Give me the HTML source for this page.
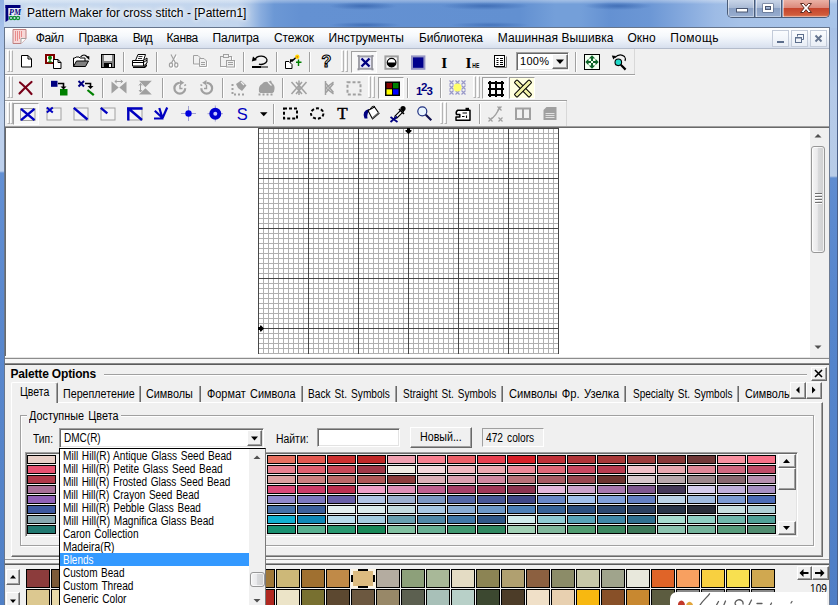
<!DOCTYPE html><html><head><meta charset="utf-8"><title>Pattern Maker for cross stitch</title><style>
html,body{margin:0;padding:0}
body{width:838px;height:605px;overflow:hidden;position:relative;background:#f0f0f0;font-family:"Liberation Sans",sans-serif;font-size:12px;color:#000}
.a{position:absolute;box-sizing:border-box}
.t{position:absolute;white-space:nowrap;line-height:1}
svg{position:absolute;overflow:visible}
.vsep{position:absolute;width:1px;background:#a0a0a0;box-shadow:1px 0 0 #fff}
.hsep{position:absolute;height:1px;background:#a0a0a0;box-shadow:0 1px 0 #fff}
.grip{position:absolute;width:1px;background:#fff;box-shadow:1px 0 0 #a0a0a0,3px 0 0 #fff,4px 0 0 #a0a0a0}
.btn{position:absolute;box-sizing:border-box;background:#f0f0f0;border:1px solid;border-color:#fff #696969 #696969 #fff;box-shadow:inset -1px -1px 0 #a0a0a0}
.sunk{position:absolute;box-sizing:border-box;border:1px solid;border-color:#a0a0a0 #fff #fff #a0a0a0;box-shadow:inset 1px 1px 0 #696969,inset -1px -1px 0 #e3e3e3}
</style></head><body>
<div class="a" style="left:0;top:0;width:838px;height:28px;background:radial-gradient(ellipse 34px 4px at 363px 6px,rgba(52,98,172,.75),rgba(52,98,172,0)),radial-gradient(ellipse 36px 3px at 365px 25px,rgba(52,98,172,.7),rgba(52,98,172,0)),radial-gradient(ellipse 44px 4px at 485px 6px,rgba(52,98,172,.7),rgba(52,98,172,0)),radial-gradient(ellipse 40px 3px at 490px 25px,rgba(52,98,172,.6),rgba(52,98,172,0)),radial-gradient(ellipse 34px 4px at 618px 6px,rgba(52,98,172,.7),rgba(52,98,172,0)),linear-gradient(180deg,rgba(255,255,255,.35) 0,rgba(255,255,255,.12) 3px,rgba(255,255,255,0) 4px),linear-gradient(90deg,#c8daef 0,#c2d5ed 238px,#adc6e7 250px,#88acde 261px,#6c98d5 274px,#6491d2 300px,#6290d1 520px,#749fd9 555px,#749fd9 580px,#6491d2 610px,#6c97d5 650px,#86aade 685px,#9dbbe5 715px,#a6c2e8 740px,#a8c4e9 838px)"></div>
<div class="a" style="left:0;top:0;width:4px;height:605px;background:linear-gradient(180deg,#8fb0e2 0,#a9c3ea 30px,#bdd0ec 120px,#bdd0ec 171px,#6390d4 173px,#5a88ce 300px,#5080c6 605px)"></div>
<div class="a" style="left:4px;top:27px;width:1px;height:578px;background:#66758c;"></div>
<div class="a" style="left:830px;top:28px;width:7px;height:577px;background:linear-gradient(180deg,#a6c0e6 0,#b4cae9 60px,#b8cce8 148px,#5f8cd0 150px,#5585cc 300px,#4f7ec6 577px)"></div>
<div class="a" style="left:829px;top:27px;width:1px;height:578px;background:#6c7b93;"></div>
<div class="a" style="left:837px;top:0px;width:1px;height:605px;background:#4a5f86;"></div>
<div class="a" style="left:5px;top:27px;width:824px;height:1px;background:#66758c;"></div>
<svg style="left:5px;top:5px" width="16" height="17" viewBox="0 0 15 17"><rect x="0" y="0" width="15" height="3" fill="#00007b"/><path d="M0 0h3v15l-3 2z" fill="#00007b"/><rect x="3" y="3" width="12" height="8" fill="#e8eef8"/><circle cx="5.5" cy="13" r="1.6" fill="none" stroke="#109030" stroke-width="1.2"/><circle cx="9" cy="13" r="1.6" fill="none" stroke="#109030" stroke-width="1.2"/><circle cx="12.5" cy="13" r="1.6" fill="none" stroke="#109030" stroke-width="1.2"/><text x="3.5" y="10" font-family="Liberation Serif,serif" font-style="italic" font-weight="bold" font-size="8" fill="#00007b">PM</text></svg>
<div class="t" style="left:27px;top:7px;font-size:12px;letter-spacing:0.017px;text-shadow:0 0 5px #fff,0 0 5px #fff,0 0 9px #fff;">Pattern Maker for cross stitch - [Pattern1]</div>
<div class="a" style="left:727px;top:0;width:103px;height:18px;border:1px solid #4a5c78;border-top:0;border-radius:0 0 5px 5px;background:#8ea4c6;overflow:hidden"><div class="a" style="left:0;top:0;width:27px;height:17px;background:linear-gradient(180deg,#c9d5e8 0,#aabbd6 45%,#8aa0c4 50%,#98aed0 100%);border-right:1px solid #4a5c78;box-shadow:inset 1px 0 0 rgba(255,255,255,.5),inset -1px -1px 0 rgba(255,255,255,.4)"></div><div class="a" style="left:28px;top:0;width:26px;height:17px;background:linear-gradient(180deg,#c9d5e8 0,#aabbd6 45%,#8aa0c4 50%,#98aed0 100%);border-right:1px solid #4a5c78;box-shadow:inset 1px 0 0 rgba(255,255,255,.5),inset -1px -1px 0 rgba(255,255,255,.4)"></div><div class="a" style="left:55px;top:0;width:47px;height:17px;background:linear-gradient(180deg,#eab1a5 0,#dc8a7c 45%,#c6452d 50%,#cf5a3a 85%,#dd8060 100%);box-shadow:inset 1px 0 0 rgba(255,255,255,.5),inset -1px -1px 0 rgba(255,255,255,.4)"></div></div>
<svg style="left:736px;top:8px" width="12" height="5"><rect x="0.5" y="0.5" width="11" height="3.5" fill="#fff" stroke="#4a5670" stroke-width="1"/></svg>
<svg style="left:762px;top:3px" width="12" height="10"><rect x="1" y="1" width="10" height="8" fill="none" stroke="#4a5670" stroke-width="1" /><rect x="2" y="2" width="8" height="6" fill="none" stroke="#fff" stroke-width="2"/><rect x="3.5" y="3.5" width="5" height="3" fill="none" stroke="#4a5670" stroke-width="1"/></svg>
<svg style="left:799px;top:2px" width="14" height="12" viewBox="0 0 14 12"><path d="M1.5 1.5h3.2L7 4.3 9.3 1.5h3.2L8.8 6l3.7 4.5H9.3L7 7.7 4.7 10.5H1.5L5.2 6z" fill="#fff" stroke="#5a2a20" stroke-width="1" stroke-linejoin="round"/></svg>
<div class="a" style="left:5px;top:28px;width:824px;height:20px;background:linear-gradient(180deg,#ffffff 0,#f5f8fc 40%,#e7edf6 70%,#d7dfed 100%)"></div>
<div class="a" style="left:5px;top:48px;width:824px;height:1px;background:#b4bccb;"></div>
<div class="t" style="left:35.7px;top:32px;font-size:12px;letter-spacing:-0.404px;">Файл</div>
<div class="t" style="left:78.5px;top:32px;font-size:12px;letter-spacing:-0.258px;">Правка</div>
<div class="t" style="left:132.8px;top:32px;font-size:12px;letter-spacing:-0.840px;">Вид</div>
<div class="t" style="left:166.5px;top:32px;font-size:12px;letter-spacing:-0.384px;">Канва</div>
<div class="t" style="left:212.5px;top:32px;font-size:12px;letter-spacing:-0.194px;">Палитра</div>
<div class="t" style="left:274px;top:32px;font-size:12px;letter-spacing:-0.089px;">Стежок</div>
<div class="t" style="left:328.5px;top:32px;font-size:12px;letter-spacing:0.061px;">Инструменты</div>
<div class="t" style="left:419px;top:32px;font-size:12px;letter-spacing:-0.145px;">Библиотека</div>
<div class="t" style="left:497.8px;top:32px;font-size:12px;letter-spacing:0.080px;">Машинная Вышивка</div>
<div class="t" style="left:627.4px;top:32px;font-size:12px;letter-spacing:0.102px;">Окно</div>
<div class="t" style="left:670.2px;top:32px;font-size:12px;letter-spacing:0.373px;">Помощь</div>
<svg style="left:12px;top:29px" width="15" height="15" viewBox="0 0 15 15"><path d="M1 0.5h13v9l-5 5H1z" fill="#f8d8d8" stroke="#c08080" stroke-width="1"/><path d="M9 14.5v-5h5" fill="#fff" stroke="#a0a0a0" stroke-width="1"/><path d="M3 3h8M3 5h8M3 7h8M3 9h5M3 11h4" stroke="#d84040" stroke-width="1" stroke-dasharray="1 1"/></svg>
<div class="a" style="left:772px;top:30px;width:17px;height:17px;border:1px solid #c3cbd9;background:linear-gradient(180deg,#fafcfe,#e9eef6)"></div>
<div class="a" style="left:791px;top:30px;width:17px;height:17px;border:1px solid #c3cbd9;background:linear-gradient(180deg,#fafcfe,#e9eef6)"></div>
<div class="a" style="left:810px;top:30px;width:17px;height:17px;border:1px solid #c3cbd9;background:linear-gradient(180deg,#fafcfe,#e9eef6)"></div>
<svg style="left:772px;top:30px" width="17" height="17"><rect x="5" y="11" width="7" height="2" fill="#5c6e8c"/></svg>
<svg style="left:791px;top:30px" width="17" height="17"><path d="M6.5 6.5v-2h6v5h-2" fill="none" stroke="#5c6e8c" stroke-width="1"/><rect x="6" y="4" width="7" height="1" fill="#5c6e8c"/><rect x="4.5" y="7.5" width="6" height="5" fill="none" stroke="#5c6e8c" stroke-width="1"/><rect x="4" y="7" width="7" height="1.5" fill="#5c6e8c"/></svg>
<svg style="left:810px;top:30px" width="17" height="17"><path d="M5.500 5.500l6 6M11.500 5.500l-6 6" stroke="#64748f" stroke-width="1.900"/></svg>
<div class="a" style="left:5px;top:49px;width:824px;height:78px;background:#f0f0f0;"></div>
<div class="hsep" style="left:5px;top:74px;width:630px"></div>
<div class="hsep" style="left:5px;top:100px;width:562px"></div>
<div class="a" style="left:5px;top:126px;width:824px;height:1px;background:#a0a0a0;"></div>
<div class="a" style="left:5px;top:127px;width:824px;height:1px;background:#696969;"></div>
<div class="a" style="left:7px;top:50px;width:3px;height:22px;border:1px solid;border-color:#fff #b4b4b4 #b4b4b4 #fff"></div>
<div class="a" style="left:10px;top:50px;width:3px;height:22px;border:1px solid;border-color:#fff #b4b4b4 #b4b4b4 #fff"></div>
<div class="a" style="left:7px;top:76px;width:3px;height:22px;border:1px solid;border-color:#fff #b4b4b4 #b4b4b4 #fff"></div>
<div class="a" style="left:10px;top:76px;width:3px;height:22px;border:1px solid;border-color:#fff #b4b4b4 #b4b4b4 #fff"></div>
<div class="a" style="left:7px;top:102px;width:3px;height:22px;border:1px solid;border-color:#fff #b4b4b4 #b4b4b4 #fff"></div>
<div class="a" style="left:10px;top:102px;width:3px;height:22px;border:1px solid;border-color:#fff #b4b4b4 #b4b4b4 #fff"></div>
<div class="vsep" style="left:123px;top:52px;height:20px"></div>
<div class="vsep" style="left:156px;top:52px;height:20px"></div>
<div class="vsep" style="left:243px;top:52px;height:20px"></div>
<div class="vsep" style="left:276px;top:52px;height:20px"></div>
<div class="vsep" style="left:309px;top:52px;height:20px"></div>
<div class="vsep" style="left:575px;top:52px;height:20px"></div>
<div class="a" style="left:341px;top:50px;width:3px;height:22px;border:1px solid;border-color:#fff #b4b4b4 #b4b4b4 #fff"></div>
<div class="a" style="left:345px;top:50px;width:3px;height:22px;border:1px solid;border-color:#fff #b4b4b4 #b4b4b4 #fff"></div>
<div class="vsep" style="left:42px;top:78px;height:20px"></div>
<div class="vsep" style="left:102px;top:78px;height:20px"></div>
<div class="vsep" style="left:162px;top:78px;height:20px"></div>
<div class="vsep" style="left:222px;top:78px;height:20px"></div>
<div class="vsep" style="left:282px;top:78px;height:20px"></div>
<div class="vsep" style="left:407px;top:78px;height:20px"></div>
<div class="vsep" style="left:440px;top:78px;height:20px"></div>
<div class="a" style="left:368px;top:76px;width:3px;height:22px;border:1px solid;border-color:#fff #b4b4b4 #b4b4b4 #fff"></div>
<div class="a" style="left:372px;top:76px;width:3px;height:22px;border:1px solid;border-color:#fff #b4b4b4 #b4b4b4 #fff"></div>
<div class="a" style="left:473px;top:76px;width:3px;height:22px;border:1px solid;border-color:#fff #b4b4b4 #b4b4b4 #fff"></div>
<div class="a" style="left:477px;top:76px;width:3px;height:22px;border:1px solid;border-color:#fff #b4b4b4 #b4b4b4 #fff"></div>
<div class="vsep" style="left:273px;top:104px;height:20px"></div>
<div class="vsep" style="left:479px;top:104px;height:20px"></div>
<div class="a" style="left:440px;top:102px;width:3px;height:22px;border:1px solid;border-color:#fff #b4b4b4 #b4b4b4 #fff"></div>
<div class="a" style="left:444px;top:102px;width:3px;height:22px;border:1px solid;border-color:#fff #b4b4b4 #b4b4b4 #fff"></div>
<div class="a" style="left:634px;top:49px;width:1px;height:25px;background:#d8d8d8"></div>
<div class="a" style="left:566px;top:101px;width:1px;height:25px;background:#d8d8d8"></div>
<div class="a" style="left:351px;top:51px;width:26px;height:22px;background:#f8f8f8;border:1px solid;border-color:#a0a0a0 #fff #fff #a0a0a0"></div>
<div class="a" style="left:378px;top:77px;width:26px;height:22px;background:#f8f8f8;border:1px solid;border-color:#a0a0a0 #fff #fff #a0a0a0"></div>
<div class="a" style="left:482px;top:77px;width:26px;height:22px;background:#f8f8f8;border:1px solid;border-color:#a0a0a0 #fff #fff #a0a0a0"></div>
<div class="a" style="left:509px;top:77px;width:26px;height:22px;background:#ffffe1;border:1px solid;border-color:#a0a0a0 #fff #fff #a0a0a0"></div>
<div class="a" style="left:13px;top:103px;width:26px;height:22px;background:#f8f8f8;border:1px solid;border-color:#a0a0a0 #fff #fff #a0a0a0"></div>
<div class="sunk" style="left:516px;top:52px;width:53px;height:19px;background:#fff"></div>
<div class="btn" style="left:552px;top:54px;width:16px;height:15px"></div>
<div class="t" style="left:520px;top:56px;font-size:11px;letter-spacing:0.3px">100%</div>
<svg style="left:0;top:0" width="838" height="130" viewBox="0 0 838 130">
<path d="M21.5 55.500h6.500l3.500 3.500v8h-10z" fill="#fff" stroke="#000"/><path d="M28 55.500v3.500h3.500" fill="none" stroke="#000"/>
<rect x="46" y="55" width="8" height="8" fill="#fff" stroke="#800000" stroke-width="2"/><circle cx="50" cy="57.800" r="2" fill="#008000"/><path d="M50 59v3.500M48 62h4" stroke="#008000" stroke-width="1.200"/><path d="M53.500 59.500h4.500l3 3v6h-7.500z" fill="#fff" stroke="#000"/><path d="M58 59.500v3h3" fill="none" stroke="#000"/>
<path d="M73.500 66.500v-8.500h1.500l1-1h3l1 1h5v3" fill="#fff" stroke="#000"/><path d="M73.500 66.500l3-5.500h12l-3 5.500z" fill="#808080" stroke="#000"/><path d="M80.500 57q3.500-4 7 0" fill="none" stroke="#000" stroke-width="1.100"/><path d="M85.300 56.300h4v3.700z" fill="#000"/>
<rect x="101.500" y="54.500" width="13" height="13" fill="#808080" stroke="#000"/><rect x="104" y="55" width="8" height="6" fill="#ececec"/><rect x="104" y="63" width="8" height="4.500" fill="#000"/><rect x="109" y="64" width="2" height="3" fill="#fff"/>
<path d="M135.500 60.500l2.500-6h7.500l-2 6z" fill="#fff" stroke="#000"/><path d="M138.500 56.500h4M138 58.500h4" stroke="#000" stroke-width="0.800"/><path d="M132.500 60.500h11l3.500-2.500v5l-3.500 3h-11z" fill="#fff" stroke="#000"/><path d="M132.500 62.500h11l3.500-2.500M143.500 60.500v5.500" fill="none" stroke="#000"/><path d="M133 66.500h11l3-2.500v2l-2 2h-12z" fill="#000"/>
<g transform="translate(1,1)" stroke="#fff" fill="none" stroke-width="1.200"><path d="M171 54.500l4.500 8.500M176 54.500l-4.500 8.500"/><ellipse cx="171" cy="65" rx="1.600" ry="2.200"/><ellipse cx="176.300" cy="65" rx="1.600" ry="2.200"/></g>
<g transform="translate(0,0)" stroke="#a0a0a0" fill="none" stroke-width="1.200"><path d="M171 54.500l4.500 8.500M176 54.500l-4.500 8.500"/><ellipse cx="171" cy="65" rx="1.600" ry="2.200"/><ellipse cx="176.300" cy="65" rx="1.600" ry="2.200"/></g>
<g transform="translate(1,1)" stroke="#fff" fill="#f0f0f0"><path d="M193.500 55.500h4.500l2.500 2.500v6h-7z"/><path d="M199.500 58.500h4.500l2.500 2.500v5.500h-7z"/><path d="M201 62.500h4M201 64.500h4" fill="none"/></g>
<g transform="translate(0,0)" stroke="#a0a0a0" fill="#f0f0f0"><path d="M193.500 55.500h4.500l2.500 2.500v6h-7z"/><path d="M199.500 58.500h4.500l2.500 2.500v5.500h-7z"/><path d="M201 62.500h4M201 64.500h4" fill="none"/></g>
<g transform="translate(1,1)" stroke="#fff" fill="#f0f0f0"><rect x="220.500" y="56.500" width="11" height="10"/><rect x="223.500" y="54.500" width="5" height="3"/><rect x="226.500" y="60.500" width="8" height="6.500"/><path d="M228 62.500h5M228 64.500h5" fill="none"/></g>
<g transform="translate(0,0)" stroke="#a0a0a0" fill="#f0f0f0"><rect x="220.500" y="56.500" width="11" height="10"/><rect x="223.500" y="54.500" width="5" height="3"/><rect x="226.500" y="60.500" width="8" height="6.500"/><path d="M228 62.500h5M228 64.500h5" fill="none"/></g>
<path d="M255 60.300A6 4.200 0 1 1 258.900 64.200" fill="none" stroke="#000" stroke-width="1.300"/><path d="M251.800 61.500l1.200-5l4 3.500z" fill="#000"/><rect x="252" y="66" width="9.500" height="2" fill="#000"/><rect x="262.500" y="66" width="1" height="2" fill="#000"/><rect x="264.500" y="66" width="1" height="2" fill="#000"/><rect x="266.500" y="66" width="1" height="2" fill="#000"/>
<path d="M285.500 61.500h3.500l3 3v4h-6.500z" fill="#fff" stroke="#000"/><path d="M296 57.500l-4.500 4" stroke="#000" stroke-width="1.600"/><path d="M290 63v-3.800h3.800z" fill="#000"/><circle cx="297.300" cy="56.800" r="2.200" fill="#ffd800"/><circle cx="297.300" cy="56.800" r="0.900" fill="#e07000"/><path d="M298.500 59.500v6.500M296 62.300h5.500" stroke="#008000" stroke-width="1.400"/>
<text x="321.500" y="67.300" font-family="Liberation Sans,sans-serif" font-weight="bold" font-size="16" fill="#fff" stroke="#000" stroke-width="1.100">?</text>
<rect x="359" y="56.400" width="13" height="12.400" fill="#e8e8f8" stroke="#a0a0a8" stroke-width="2"/><path d="M361.500 58.500l8 8M369.500 58.500l-8 8" stroke="#000080" stroke-width="2.400"/>
<rect x="358.5" y="56" width="2" height="2" fill="#909098" transform="translate(-1,-1)"/>
<rect x="372.5" y="56" width="2" height="2" fill="#909098" transform="translate(-1,-1)"/>
<rect x="358.5" y="69.3" width="2" height="2" fill="#909098" transform="translate(-1,-1)"/>
<rect x="372.5" y="69.3" width="2" height="2" fill="#909098" transform="translate(-1,-1)"/>
<rect x="385.400" y="56.400" width="12.400" height="12.400" fill="#fff" stroke="#a0a0a0" stroke-width="2"/><circle cx="391.600" cy="62.600" r="4.300" fill="#fff" stroke="#000" stroke-width="1.200"/><path d="M387.300 62.600a4.300 4.300 0 0 0 8.600 0z" fill="#000"/>
<rect x="412" y="56.400" width="12.400" height="12.400" fill="#00008c" stroke="#9494c4" stroke-width="2"/>
<text x="441.300" y="67.600" font-family="Liberation Serif,serif" font-weight="bold" font-size="15.500" fill="#000">I</text>
<text x="465.600" y="67.600" font-family="Liberation Serif,serif" font-weight="bold" font-size="15.500" fill="#000">I</text><text x="472.300" y="68.300" font-family="Liberation Sans,sans-serif" font-weight="bold" font-size="6.500" fill="#000" textLength="7" lengthAdjust="spacingAndGlyphs">HE</text>
<path d="M495.500 67.500h11v-11" fill="none" stroke="#808080"/><rect x="494.500" y="55.500" width="10" height="11" fill="#fff" stroke="#000"/><path d="M496.500 58.500h2M500 58.500h3M496.500 60.500h2M500 60.500h3M496.500 62.500h2M500 62.500h3M496.500 64.500h2M500 64.500h3" stroke="#000"/>
<path d="M556 59.500h8l-4 4.500z" fill="#000"/>
<rect x="584.500" y="54.500" width="15" height="15" fill="#f2fff2" stroke="#000"/>
<g fill="#0c6428"><path d="M592 55.300l3.200 3.200h-2.200v2.500h-2v-2.500h-2.200z"/><path d="M592 68.700l3.200-3.200h-2.200v-2.500h-2v2.500h-2.200z"/><path d="M585.300 62l3.200-3.200v2.200h2.500v2h-2.500v2.200z"/><path d="M598.700 62l-3.200-3.200v2.200h-2.500v2h2.500v2.200z"/></g>
<path d="M614.500 58q5-5.500 10-1.500q1.500 2 0.500 4.500" fill="none" stroke="#000" stroke-width="1.100"/><path d="M611.800 55.500l4.500 0.500l-3 3.500z" fill="#000"/><circle cx="618.300" cy="62.300" r="3.300" fill="#20d8c8" stroke="#000" stroke-width="1.100"/><path d="M620.800 64.800l4.800 4.800" stroke="#000" stroke-width="2.200"/>
<path d="M20 82.500q5 4 11.500 11.500M31.500 82q-6 5-12 11.500" fill="none" stroke="#780018" stroke-width="2.200" stroke-linecap="round"/>
<rect x="51" y="80.800" width="6.500" height="6" fill="#000080"/><rect x="60" y="89" width="7.500" height="6.500" fill="#008000"/><path d="M58 83.500h5.500v4" fill="none" stroke="#000" stroke-width="1.600"/><path d="M60.500 86.500h6l-3 3z" fill="#000"/>
<path d="M78.500 81l5.500 5.500M84 81l-5.500 5.500" stroke="#000080" stroke-width="2"/><path d="M85 83.500h5.500v3.500" fill="none" stroke="#000" stroke-width="1.600"/><path d="M87.500 86h6l-3 3z" fill="#000"/><path d="M87.500 90l6.300 5.200" stroke="#008000" stroke-width="2.200"/>
<g fill="#a0a0a0"><path d="M111.500 81.500l7.200 6l-7.200 6z"/><path d="M126.500 81.500l-7.200 6l7.200 6z"/></g><path d="M115 81.500h7.500M116.800 80l-2 1.500l2 1.500M120.700 80l2 1.500l-2 1.500" fill="none" stroke="#a0a0a0"/>
<g fill="#a0a0a0"><path d="M139 80.800h12.800l-6.400 6.400z"/><path d="M139 94.600h12.800l-6.400-6.400z"/></g><path d="M140.500 83.500v8.500M139 85.500l1.500-2l1.500 2M139 90l1.500 2l1.500-2" fill="none" stroke="#a0a0a0"/>
<path d="M179.800 82.800a5.400 5.400 0 1 0 5.400 5.400" fill="none" stroke="#a0a0a0" stroke-width="2.200"/><path d="M180 80l4.300 2.800l-4.300 2.800z" fill="#a0a0a0"/><path d="M180 85v3.500h2.500" fill="none" stroke="#a0a0a0" stroke-width="1.400"/><path d="M184.800 84.500l1 1.800" stroke="#a0a0a0" stroke-width="2" stroke-dasharray="1.500 1.500"/>
<path d="M206.700 82.800a5.400 5.400 0 1 1-5.400 5.400" fill="none" stroke="#a0a0a0" stroke-width="2.200"/><path d="M206.500 80l-4.300 2.800l4.300 2.800z" fill="#a0a0a0"/><path d="M206.500 85v3.500h-2.500" fill="none" stroke="#a0a0a0" stroke-width="1.400"/><path d="M201.700 84.500l-1 1.800" stroke="#a0a0a0" stroke-width="2" stroke-dasharray="1.500 1.500"/>
<path d="M232.500 84v10.500h12" fill="none" stroke="#a0a0a0" stroke-width="2" stroke-dasharray="2 2"/><path d="M236 84l5-3.500l5.500 5l-4.500 5.500l-4-3z" fill="#a0a0a0"/><path d="M241 82l3 3" stroke="#f0f0f0" stroke-width="1.200"/>
<path d="M259 92q-1-6 3-8q2-3 6-2l3-1.500l1 2.500q3 2 2.500 6q0 3-2 4h-12z" fill="#a0a0a0"/><path d="M268 82l3.500 3.500" stroke="#f0f0f0" stroke-width="1.200"/><path d="M258.500 94.500h16" stroke="#a0a0a0" stroke-width="2" stroke-dasharray="2 2"/>
<path d="M291.500 82l10.500 12M302 82l-10.500 12M296 82l10.500 12M306.500 82l-10.500 12M299 80.500v14.500" fill="none" stroke="#a0a0a0" stroke-width="1.500"/>
<path d="M325.500 81v14M333.500 82l-7.500 6l7.500 6M326 83.500l7.500 9M326 92.500l7.500-9" fill="none" stroke="#a0a0a0" stroke-width="1.500"/>
<rect x="347.500" y="82.200" width="13" height="12.300" fill="none" stroke="#a0a0a0" stroke-width="2" stroke-dasharray="3 2"/>
<rect x="385" y="81.500" width="15" height="14.500" fill="#000"/><rect x="386.500" y="83" width="5.500" height="5.300" fill="#800000"/><rect x="393" y="83" width="5.500" height="5.300" fill="#008000"/><rect x="386.500" y="89.300" width="5.500" height="5.300" fill="#ffff00"/><rect x="393" y="89.300" width="5.500" height="5.300" fill="#0000ff"/>
<g font-family="Liberation Sans,sans-serif" font-weight="bold" font-size="11.500" fill="#000080"><text x="416" y="95">1</text><text x="421" y="90.500">2</text><text x="426.500" y="95">3</text></g>
<g stroke="#9898c8" stroke-width="1.200"><path d="M449.5 80.5l4 4M453.5 80.5l-4 4"/><path d="M449.5 85.5l4 4M453.5 85.5l-4 4"/><path d="M449.5 90.5l4 4M453.5 90.5l-4 4"/><path d="M455.5 80.5l4 4M459.5 80.5l-4 4"/><path d="M455.5 85.5l4 4M459.5 85.5l-4 4"/><path d="M455.5 90.5l4 4M459.5 90.5l-4 4"/><path d="M461.5 80.5l4 4M465.5 80.5l-4 4"/><path d="M461.5 85.5l4 4M465.5 85.5l-4 4"/><path d="M461.5 90.5l4 4M465.5 90.5l-4 4"/></g><circle cx="457.500" cy="87.500" r="4" fill="#ffff68"/>
<path d="M488 83h16M488 89h16M488 95h16M490 81v16M496 81v16M502 81v16" stroke="#000" stroke-width="2"/>
<g transform="rotate(45 523 88.500)"><rect x="512.500" y="86.500" width="21" height="4" rx="1" fill="#f4f4a8" stroke="#000"/></g><g transform="rotate(-45 523 88.500)"><rect x="512.500" y="86.500" width="21" height="4" rx="1" fill="#f4f4a8" stroke="#000"/></g>
<rect x="20.5" y="108.5" width="14.5" height="12" fill="#f4f4f4" stroke="#a0a0a0"/>
<path d="M21 108.800l13.500 11.400M34.500 108.800l-13.500 11.400" stroke="#0000c0" stroke-width="2.400"/>
<rect x="47" y="108" width="14" height="12" fill="#f4f4f4" stroke="#a0a0a0"/>
<path d="M46.800 107.500l6 5M52.800 107.500l-6 5" stroke="#0000c0" stroke-width="2"/>
<rect x="74" y="108" width="14" height="12" fill="#f4f4f4" stroke="#a0a0a0"/>
<path d="M73.800 107.800l13.700 11.700" stroke="#0000c0" stroke-width="2.400"/>
<rect x="101" y="108" width="14" height="12" fill="#f4f4f4" stroke="#a0a0a0"/>
<path d="M100.800 107.800l6.500 5.500" stroke="#0000c0" stroke-width="2.400"/>
<rect x="128" y="108" width="14" height="12" fill="#f4f4f4" stroke="#a0a0a0"/>
<path d="M127 108.500h15.500M128.300 107.500v13M128.500 108.500l13.500 11.500" stroke="#0000c0" stroke-width="2.400" fill="none"/>
<path d="M154 118.500h9.500M154.800 110.800l7.200 6.700M159.300 108l3 9.500M167.200 107.500l-4.400 10" stroke="#0000c0" stroke-width="2.200" fill="none"/>
<path d="M181 113.500h15M188.500 106v15" stroke="#a0a0d0"/><circle cx="188.500" cy="113.500" r="3.200" fill="#0000e0"/>
<path d="M215.300 105.500v16M207.500 113.700h15.500" stroke="#a0a0d0"/><circle cx="215.300" cy="113.700" r="4" fill="#c8c8ff" stroke="#0000d0" stroke-width="4"/>
<text x="236.800" y="119.800" font-family="Liberation Sans,sans-serif" font-size="16.500" fill="#0000c0">S</text>
<path d="M260 112.300h7.500l-3.750 4z" fill="#000"/>
<rect x="284" y="108.400" width="13" height="10.200" fill="none" stroke="#000" stroke-width="2" stroke-dasharray="3 2"/>
<ellipse cx="317.200" cy="113.500" rx="6.200" ry="5.200" fill="none" stroke="#000" stroke-width="2" stroke-dasharray="3 2"/>
<text x="337.300" y="118.800" font-family="Liberation Serif,serif" font-size="17" fill="#000" stroke="#000" stroke-width="0.500">T</text>
<path d="M364.500 118.500q-3-8 4.500-9.500l1.500 2q-4 1-3 7.500z" fill="#000080"/><path d="M368 110.500l6.500-3.500l4.500 6.500l-6.500 5.500z" fill="#fff" stroke="#000" stroke-width="1.100"/><path d="M372.500 119l6.500-5.500v-2l-7 6z" fill="#606060"/><path d="M370.500 109q1-3.500 4.500-2.500" fill="none" stroke="#000"/>
<circle cx="403" cy="108.500" r="2.600" fill="#000"/><path d="M401.500 109.500l2 2l-6.500 6.500l-2.500 0.500l0.500-2.500z" fill="#fff" stroke="#000" stroke-width="1.100"/><path d="M399 109l5 5" stroke="#000" stroke-width="1.600"/><path d="M390.500 117l7 5M397 116.500l-6.500 5.500" stroke="#000080" stroke-width="1.800"/>
<circle cx="422.300" cy="111.300" r="4.500" fill="#eaf6ff" stroke="#203080" stroke-width="1.200"/><path d="M425.800 114.800l5.500 5.500" stroke="#101050" stroke-width="2.200"/>
<path d="M457.500 110.300h12.500v10h-14v-3.300h3.800v-2.400h-3.300q-1-2.800 1-4.300z" fill="#fff" stroke="#000" stroke-width="1.500" stroke-linejoin="round"/><path d="M462.500 113h4.500M462 116.500h2.500M466.500 115.500v2.500" fill="none" stroke="#000" stroke-width="1.100"/><rect x="465.500" y="107.800" width="3.500" height="2.200" fill="#000"/>
<path d="M490.500 119.500q6-4 9.500-13" fill="none" stroke="#a0a0a0" stroke-width="1.300"/><path d="M497.500 106.500l4 4M501.500 106.500l-4 4M488.500 117.500l4 4M492.500 117.500l-4 4M498.500 117.500l4 4M502.500 117.500l-4 4" stroke="#a0a0a0" stroke-width="1.200"/>
<rect x="516" y="108.500" width="14" height="10.500" fill="none" stroke="#a0a0a0" stroke-width="2"/><path d="M523 108.500v10.500" stroke="#a0a0a0" stroke-width="2"/>
<path d="M543.500 120v-10l3-3h10v13z" fill="#a0a0a0"/><path d="M545.500 113.500h9M545.500 115.500h9M545.500 117.500h9" stroke="#f0f0f0" stroke-width="0.800"/>
</svg>
<div class="a" style="left:5px;top:128px;width:805px;height:229px;background:#fff;"></div>
<div class="a" style="left:5px;top:128px;width:1px;height:228px;background:#6a6a6a;"></div>
<div class="a" style="left:258px;top:128px;width:301px;height:226px;background-color:#fff;background-image:linear-gradient(90deg,#484848 1px,transparent 1px),linear-gradient(180deg,#484848 1px,transparent 1px),linear-gradient(90deg,#b0b0b0 1px,transparent 1px),linear-gradient(180deg,#b0b0b0 1px,transparent 1px);background-size:50px 50px,50px 50px,5px 5px,5px 5px"></div>
<svg style="left:0;top:0" width="838" height="360"><path d="M407 128h3v2h1.500v1.200l-3 2.800l-3-2.800v-1.200h1.500z" fill="#000"/><path d="M258 327v3h2v1.500h1.200l2.800-3l-2.800-3h-1.200v1.500z" fill="#000"/></svg>
<div class="a" style="left:810px;top:128px;width:16px;height:227px;background:#f0f0f0;"></div>
<svg style="left:810px;top:128px" width="16" height="227"><path d="M4.5 9.5l3.5-3.5 3.5 3.5z" fill="#505050"/><path d="M4.5 217.5l3.5 3.5 3.5-3.5z" fill="#505050"/></svg>
<div class="a" style="left:811px;top:146px;width:14px;height:107px;border:1px solid #979797;border-radius:3px;background:linear-gradient(90deg,#f5f5f5 0,#e9e9eb 45%,#d9dadc 50%,#cfcfcf 100%);box-shadow:inset 0 0 0 1px rgba(255,255,255,.7)"></div>
<svg style="left:815px;top:192px" width="8" height="12"><path d="M0 1.5h7M0 4.500h7M0 7.500h7M0 10.500h7" stroke="#707070" stroke-width="1"/><path d="M0 2.500h7M0 5.500h7M0 8.500h7M0 11.500h7" stroke="#fff" stroke-width="1"/></svg>
<div class="a" style="left:5px;top:357px;width:824px;height:209px;background:#f0f0f0;"></div>
<div class="a" style="left:5px;top:357px;width:824px;height:1px;background:#e4e4e4;"></div>
<div class="a" style="left:5px;top:358px;width:824px;height:1px;background:#8c8c8c;"></div>
<div class="a" style="left:5px;top:359px;width:824px;height:4px;background:#f6f6f6;"></div>
<div class="a" style="left:5px;top:363px;width:824px;height:1px;background:#8a8a8a;"></div>
<div class="a" style="left:5px;top:364px;width:824px;height:1px;background:#5a5a5a;"></div>
<div class="t" style="left:10.5px;top:368px;font-size:12px;letter-spacing:-0.168px;font-weight:bold;">Palette Options</div>
<div class="a" style="left:104px;top:374px;width:703px;height:1px;background:#a0a0a0;"></div>
<div class="a" style="left:104px;top:375px;width:703px;height:1px;background:#fff;"></div>
<div class="btn" style="left:811px;top:367px;width:16px;height:14px"></div>
<svg style="left:811px;top:367px" width="16" height="14"><path d="M4 3l7 7M11 3l-7 7" stroke="#000" stroke-width="1.6"/></svg>
<div class="a" style="left:11px;top:402px;width:812px;height:155px;border:1px solid;border-color:#fff #696969 #696969 #fff;box-shadow:inset -1px -1px 0 #a0a0a0"></div>
<div class="a" style="left:11px;top:382px;width:47px;height:21px;background:#f0f0f0;border:1px solid;border-color:#fff #696969 transparent #fff;border-bottom:0;border-radius:2px 2px 0 0;box-shadow:inset -1px 0 0 #a0a0a0"></div>
<div class="t" style="left:19.7px;top:386px;font-size:12px;transform:scaleX(0.8763);transform-origin:0 0;">Цвета</div>
<div class="t" style="left:62.5px;top:388px;font-size:12px;transform:scaleX(0.8923);transform-origin:0 0;word-spacing:1.5px;">Переплетение</div>
<div class="a" style="left:140px;top:386px;width:1px;height:16px;background:#696969;"></div>
<div class="a" style="left:139px;top:386px;width:1px;height:16px;background:#a0a0a0;"></div>
<div class="t" style="left:146.3px;top:388px;font-size:12px;transform:scaleX(0.9016);transform-origin:0 0;word-spacing:1.5px;">Символы</div>
<div class="a" style="left:199.5px;top:386px;width:1px;height:16px;background:#696969;"></div>
<div class="a" style="left:198.5px;top:386px;width:1px;height:16px;background:#a0a0a0;"></div>
<div class="t" style="left:206.5px;top:388px;font-size:12px;transform:scaleX(0.9086);transform-origin:0 0;word-spacing:1.5px;">Формат Символа</div>
<div class="a" style="left:301.7px;top:386px;width:1px;height:16px;background:#696969;"></div>
<div class="a" style="left:300.7px;top:386px;width:1px;height:16px;background:#a0a0a0;"></div>
<div class="t" style="left:308.4px;top:388px;font-size:12px;transform:scaleX(0.8441);transform-origin:0 0;word-spacing:1.5px;">Back St. Symbols</div>
<div class="a" style="left:396.3px;top:386px;width:1px;height:16px;background:#696969;"></div>
<div class="a" style="left:395.3px;top:386px;width:1px;height:16px;background:#a0a0a0;"></div>
<div class="t" style="left:403px;top:388px;font-size:12px;transform:scaleX(0.8342);transform-origin:0 0;word-spacing:1.5px;">Straight St. Symbols</div>
<div class="a" style="left:502.2px;top:386px;width:1px;height:16px;background:#696969;"></div>
<div class="a" style="left:501.2px;top:386px;width:1px;height:16px;background:#a0a0a0;"></div>
<div class="t" style="left:508.9px;top:388px;font-size:12px;transform:scaleX(0.9292);transform-origin:0 0;word-spacing:1.5px;">Символы Фр. Узелка</div>
<div class="a" style="left:625.3px;top:386px;width:1px;height:16px;background:#696969;"></div>
<div class="a" style="left:624.3px;top:386px;width:1px;height:16px;background:#a0a0a0;"></div>
<div class="t" style="left:632.5px;top:388px;font-size:12px;transform:scaleX(0.8358);transform-origin:0 0;word-spacing:1.5px;">Specialty St. Symbols</div>
<div class="a" style="left:738px;top:386px;width:1px;height:16px;background:#696969;"></div>
<div class="a" style="left:737px;top:386px;width:1px;height:16px;background:#a0a0a0;"></div>
<div class="a" style="left:744.5px;top:388px;width:45.5px;height:14px;overflow:hidden"><div class="t" style="left:0;top:0;font-size:12px;transform:scaleX(0.9);transform-origin:0 0">Символы</div></div>
<div class="btn" style="left:790px;top:382px;width:16px;height:17px"></div>
<div class="btn" style="left:806px;top:382px;width:16px;height:17px"></div>
<svg style="left:790px;top:382px" width="32" height="17"><path d="M9.5 4.5v7l-3.5-3.5z" fill="#000"/><path d="M22 4.5v7l3.5-3.5z" fill="#000"/></svg>
<div class="a" style="left:20px;top:415px;width:794px;height:131px;border:1px solid #a0a0a0;box-shadow:1px 1px 0 #fff,inset 1px 1px 0 #fff"></div>
<div class="a" style="left:27px;top:410px;width:94px;height:12px;background:#f0f0f0;"></div>
<div class="t" style="left:29.2px;top:410px;font-size:12px;transform:scaleX(0.9016);transform-origin:0 0;word-spacing:1.5px;">Доступные Цвета</div>
<div class="t" style="left:32.5px;top:433px;font-size:12px;transform:scaleX(0.8568);transform-origin:0 0;">Тип:</div>
<div class="t" style="left:275.8px;top:433px;font-size:12px;transform:scaleX(0.8675);transform-origin:0 0;">Найти:</div>
<div class="sunk" style="left:317px;top:428px;width:83px;height:19px;background:#fff"></div>
<div class="btn" style="left:410px;top:427px;width:62px;height:21px"></div>
<div class="t" style="left:420.2px;top:431px;font-size:12px;transform:scaleX(0.8885);transform-origin:0 0;">Новый...</div>
<div class="a" style="left:482px;top:428px;width:62px;height:19px;border:1px solid;border-color:#a0a0a0 #fff #fff #a0a0a0"></div>
<div class="t" style="left:486px;top:432px;font-size:12px;transform:scaleX(0.8475);transform-origin:0 0;word-spacing:1.5px;">472 colors</div>
<div class="sunk" style="left:25px;top:452px;width:773px;height:85px;background:#f0f0f0"></div>
<svg style="left:27px;top:455px" width="751" height="80" shape-rendering="crispEdges"><rect x="0.5" y="0.5" width="28" height="8" fill="#e8d0c8" stroke="#000" stroke-width="1"/><rect x="0.5" y="10.5" width="28" height="8" fill="#e85070" stroke="#000" stroke-width="1"/><rect x="0.5" y="20.5" width="28" height="8" fill="#b03848" stroke="#000" stroke-width="1"/><rect x="0.5" y="30.5" width="28" height="8" fill="#a87098" stroke="#000" stroke-width="1"/><rect x="0.5" y="40.5" width="28" height="8" fill="#9060b8" stroke="#000" stroke-width="1"/><rect x="0.5" y="50.5" width="28" height="8" fill="#3c58a0" stroke="#000" stroke-width="1"/><rect x="0.5" y="60.5" width="28" height="8" fill="#88a8b0" stroke="#000" stroke-width="1"/><rect x="0.5" y="70.5" width="28" height="8" fill="#207870" stroke="#000" stroke-width="1"/><rect x="240.5" y="0.5" width="28" height="8" fill="#e87060" stroke="#000" stroke-width="1"/><rect x="240.5" y="10.5" width="28" height="8" fill="#e88090" stroke="#000" stroke-width="1"/><rect x="240.5" y="20.5" width="28" height="8" fill="#dca0a0" stroke="#000" stroke-width="1"/><rect x="240.5" y="30.5" width="28" height="8" fill="#dc4878" stroke="#000" stroke-width="1"/><rect x="240.5" y="40.5" width="28" height="8" fill="#9088cc" stroke="#000" stroke-width="1"/><rect x="240.5" y="50.5" width="28" height="8" fill="#4470a8" stroke="#000" stroke-width="1"/><rect x="240.5" y="60.5" width="28" height="8" fill="#10b0d0" stroke="#000" stroke-width="1"/><rect x="240.5" y="70.5" width="28" height="8" fill="#189070" stroke="#000" stroke-width="1"/><rect x="270.5" y="0.5" width="28" height="8" fill="#e45850" stroke="#000" stroke-width="1"/><rect x="270.5" y="10.5" width="28" height="8" fill="#e06070" stroke="#000" stroke-width="1"/><rect x="270.5" y="20.5" width="28" height="8" fill="#cc8080" stroke="#000" stroke-width="1"/><rect x="270.5" y="30.5" width="28" height="8" fill="#cc3c68" stroke="#000" stroke-width="1"/><rect x="270.5" y="40.5" width="28" height="8" fill="#7c78c0" stroke="#000" stroke-width="1"/><rect x="270.5" y="50.5" width="28" height="8" fill="#3c609c" stroke="#000" stroke-width="1"/><rect x="270.5" y="60.5" width="28" height="8" fill="#1088b8" stroke="#000" stroke-width="1"/><rect x="270.5" y="70.5" width="28" height="8" fill="#58b090" stroke="#000" stroke-width="1"/><rect x="300.5" y="0.5" width="28" height="8" fill="#cc3030" stroke="#000" stroke-width="1"/><rect x="300.5" y="10.5" width="28" height="8" fill="#c84858" stroke="#000" stroke-width="1"/><rect x="300.5" y="20.5" width="28" height="8" fill="#bc6868" stroke="#000" stroke-width="1"/><rect x="300.5" y="30.5" width="28" height="8" fill="#bc3050" stroke="#000" stroke-width="1"/><rect x="300.5" y="40.5" width="28" height="8" fill="#6860a8" stroke="#000" stroke-width="1"/><rect x="300.5" y="50.5" width="28" height="8" fill="#e4f0f0" stroke="#000" stroke-width="1"/><rect x="300.5" y="60.5" width="28" height="8" fill="#b8dcec" stroke="#000" stroke-width="1"/><rect x="300.5" y="70.5" width="28" height="8" fill="#289870" stroke="#000" stroke-width="1"/><rect x="330.5" y="0.5" width="28" height="8" fill="#c02828" stroke="#000" stroke-width="1"/><rect x="330.5" y="10.5" width="28" height="8" fill="#a03848" stroke="#000" stroke-width="1"/><rect x="330.5" y="20.5" width="28" height="8" fill="#b05858" stroke="#000" stroke-width="1"/><rect x="330.5" y="30.5" width="28" height="8" fill="#f0a0c8" stroke="#000" stroke-width="1"/><rect x="330.5" y="40.5" width="28" height="8" fill="#b0c4e4" stroke="#000" stroke-width="1"/><rect x="330.5" y="50.5" width="28" height="8" fill="#dcecec" stroke="#000" stroke-width="1"/><rect x="330.5" y="60.5" width="28" height="8" fill="#a4cce0" stroke="#000" stroke-width="1"/><rect x="330.5" y="70.5" width="28" height="8" fill="#188858" stroke="#000" stroke-width="1"/><rect x="360.5" y="0.5" width="28" height="8" fill="#f0a0b0" stroke="#000" stroke-width="1"/><rect x="360.5" y="10.5" width="28" height="8" fill="#f0ece4" stroke="#000" stroke-width="1"/><rect x="360.5" y="20.5" width="28" height="8" fill="#8c3c3c" stroke="#000" stroke-width="1"/><rect x="360.5" y="30.5" width="28" height="8" fill="#e090b8" stroke="#000" stroke-width="1"/><rect x="360.5" y="40.5" width="28" height="8" fill="#9cb0d0" stroke="#000" stroke-width="1"/><rect x="360.5" y="50.5" width="28" height="8" fill="#c4dce0" stroke="#000" stroke-width="1"/><rect x="360.5" y="60.5" width="28" height="8" fill="#68a0b0" stroke="#000" stroke-width="1"/><rect x="360.5" y="70.5" width="28" height="8" fill="#80c0a0" stroke="#000" stroke-width="1"/><rect x="390.5" y="0.5" width="28" height="8" fill="#f88090" stroke="#000" stroke-width="1"/><rect x="390.5" y="10.5" width="28" height="8" fill="#f4d8dc" stroke="#000" stroke-width="1"/><rect x="390.5" y="20.5" width="28" height="8" fill="#dcb0b8" stroke="#000" stroke-width="1"/><rect x="390.5" y="30.5" width="28" height="8" fill="#c06090" stroke="#000" stroke-width="1"/><rect x="390.5" y="40.5" width="28" height="8" fill="#7c98c4" stroke="#000" stroke-width="1"/><rect x="390.5" y="50.5" width="28" height="8" fill="#a8c8e4" stroke="#000" stroke-width="1"/><rect x="390.5" y="60.5" width="28" height="8" fill="#5088a8" stroke="#000" stroke-width="1"/><rect x="390.5" y="70.5" width="28" height="8" fill="#68b094" stroke="#000" stroke-width="1"/><rect x="420.5" y="0.5" width="28" height="8" fill="#ec6068" stroke="#000" stroke-width="1"/><rect x="420.5" y="10.5" width="28" height="8" fill="#f0b8c0" stroke="#000" stroke-width="1"/><rect x="420.5" y="20.5" width="28" height="8" fill="#dca0b0" stroke="#000" stroke-width="1"/><rect x="420.5" y="30.5" width="28" height="8" fill="#a84068" stroke="#000" stroke-width="1"/><rect x="420.5" y="40.5" width="28" height="8" fill="#5468a8" stroke="#000" stroke-width="1"/><rect x="420.5" y="50.5" width="28" height="8" fill="#88acd4" stroke="#000" stroke-width="1"/><rect x="420.5" y="60.5" width="28" height="8" fill="#4078a8" stroke="#000" stroke-width="1"/><rect x="420.5" y="70.5" width="28" height="8" fill="#409870" stroke="#000" stroke-width="1"/><rect x="450.5" y="0.5" width="28" height="8" fill="#e84050" stroke="#000" stroke-width="1"/><rect x="450.5" y="10.5" width="28" height="8" fill="#eca8b0" stroke="#000" stroke-width="1"/><rect x="450.5" y="20.5" width="28" height="8" fill="#d088a0" stroke="#000" stroke-width="1"/><rect x="450.5" y="30.5" width="28" height="8" fill="#a03858" stroke="#000" stroke-width="1"/><rect x="450.5" y="40.5" width="28" height="8" fill="#485898" stroke="#000" stroke-width="1"/><rect x="450.5" y="50.5" width="28" height="8" fill="#6c98c8" stroke="#000" stroke-width="1"/><rect x="450.5" y="60.5" width="28" height="8" fill="#305888" stroke="#000" stroke-width="1"/><rect x="450.5" y="70.5" width="28" height="8" fill="#308860" stroke="#000" stroke-width="1"/><rect x="480.5" y="0.5" width="28" height="8" fill="#d82028" stroke="#000" stroke-width="1"/><rect x="480.5" y="10.5" width="28" height="8" fill="#ec8898" stroke="#000" stroke-width="1"/><rect x="480.5" y="20.5" width="28" height="8" fill="#b87078" stroke="#000" stroke-width="1"/><rect x="480.5" y="30.5" width="28" height="8" fill="#8c3450" stroke="#000" stroke-width="1"/><rect x="480.5" y="40.5" width="28" height="8" fill="#404888" stroke="#000" stroke-width="1"/><rect x="480.5" y="50.5" width="28" height="8" fill="#4c80b8" stroke="#000" stroke-width="1"/><rect x="480.5" y="60.5" width="28" height="8" fill="#d0ecec" stroke="#000" stroke-width="1"/><rect x="480.5" y="70.5" width="28" height="8" fill="#a0d0b4" stroke="#000" stroke-width="1"/><rect x="510.5" y="0.5" width="28" height="8" fill="#c03038" stroke="#000" stroke-width="1"/><rect x="510.5" y="10.5" width="28" height="8" fill="#e06878" stroke="#000" stroke-width="1"/><rect x="510.5" y="20.5" width="28" height="8" fill="#a85c64" stroke="#000" stroke-width="1"/><rect x="510.5" y="30.5" width="28" height="8" fill="#e4b8dc" stroke="#000" stroke-width="1"/><rect x="510.5" y="40.5" width="28" height="8" fill="#6888c8" stroke="#000" stroke-width="1"/><rect x="510.5" y="50.5" width="28" height="8" fill="#386498" stroke="#000" stroke-width="1"/><rect x="510.5" y="60.5" width="28" height="8" fill="#90ccd4" stroke="#000" stroke-width="1"/><rect x="510.5" y="70.5" width="28" height="8" fill="#80b89c" stroke="#000" stroke-width="1"/><rect x="540.5" y="0.5" width="28" height="8" fill="#b03438" stroke="#000" stroke-width="1"/><rect x="540.5" y="10.5" width="28" height="8" fill="#c84860" stroke="#000" stroke-width="1"/><rect x="540.5" y="20.5" width="28" height="8" fill="#984850" stroke="#000" stroke-width="1"/><rect x="540.5" y="30.5" width="28" height="8" fill="#cca4cc" stroke="#000" stroke-width="1"/><rect x="540.5" y="40.5" width="28" height="8" fill="#a0c0ec" stroke="#000" stroke-width="1"/><rect x="540.5" y="50.5" width="28" height="8" fill="#2c5080" stroke="#000" stroke-width="1"/><rect x="540.5" y="60.5" width="28" height="8" fill="#58a4b8" stroke="#000" stroke-width="1"/><rect x="540.5" y="70.5" width="28" height="8" fill="#509c70" stroke="#000" stroke-width="1"/><rect x="570.5" y="0.5" width="28" height="8" fill="#a83838" stroke="#000" stroke-width="1"/><rect x="570.5" y="10.5" width="28" height="8" fill="#b83c50" stroke="#000" stroke-width="1"/><rect x="570.5" y="20.5" width="28" height="8" fill="#6c3430" stroke="#000" stroke-width="1"/><rect x="570.5" y="30.5" width="28" height="8" fill="#a878b0" stroke="#000" stroke-width="1"/><rect x="570.5" y="40.5" width="28" height="8" fill="#80a0dc" stroke="#000" stroke-width="1"/><rect x="570.5" y="50.5" width="28" height="8" fill="#2c4870" stroke="#000" stroke-width="1"/><rect x="570.5" y="60.5" width="28" height="8" fill="#4088a8" stroke="#000" stroke-width="1"/><rect x="570.5" y="70.5" width="28" height="8" fill="#3c8860" stroke="#000" stroke-width="1"/><rect x="600.5" y="0.5" width="28" height="8" fill="#9c3c3c" stroke="#000" stroke-width="1"/><rect x="600.5" y="10.5" width="28" height="8" fill="#f0c0c8" stroke="#000" stroke-width="1"/><rect x="600.5" y="20.5" width="28" height="8" fill="#d8c8cc" stroke="#000" stroke-width="1"/><rect x="600.5" y="30.5" width="28" height="8" fill="#805890" stroke="#000" stroke-width="1"/><rect x="600.5" y="40.5" width="28" height="8" fill="#6480c4" stroke="#000" stroke-width="1"/><rect x="600.5" y="50.5" width="28" height="8" fill="#2c4060" stroke="#000" stroke-width="1"/><rect x="600.5" y="60.5" width="28" height="8" fill="#307090" stroke="#000" stroke-width="1"/><rect x="600.5" y="70.5" width="28" height="8" fill="#3c7858" stroke="#000" stroke-width="1"/><rect x="630.5" y="0.5" width="28" height="8" fill="#883838" stroke="#000" stroke-width="1"/><rect x="630.5" y="10.5" width="28" height="8" fill="#e8a8b0" stroke="#000" stroke-width="1"/><rect x="630.5" y="20.5" width="28" height="8" fill="#b8a8ac" stroke="#000" stroke-width="1"/><rect x="630.5" y="30.5" width="28" height="8" fill="#443858" stroke="#000" stroke-width="1"/><rect x="630.5" y="40.5" width="28" height="8" fill="#bcd4e8" stroke="#000" stroke-width="1"/><rect x="630.5" y="50.5" width="28" height="8" fill="#283448" stroke="#000" stroke-width="1"/><rect x="630.5" y="60.5" width="28" height="8" fill="#a8dcd0" stroke="#000" stroke-width="1"/><rect x="630.5" y="70.5" width="28" height="8" fill="#8cc4b0" stroke="#000" stroke-width="1"/><rect x="660.5" y="0.5" width="28" height="8" fill="#703838" stroke="#000" stroke-width="1"/><rect x="660.5" y="10.5" width="28" height="8" fill="#e08898" stroke="#000" stroke-width="1"/><rect x="660.5" y="20.5" width="28" height="8" fill="#9c888c" stroke="#000" stroke-width="1"/><rect x="660.5" y="30.5" width="28" height="8" fill="#d4ccec" stroke="#000" stroke-width="1"/><rect x="660.5" y="40.5" width="28" height="8" fill="#a0bce0" stroke="#000" stroke-width="1"/><rect x="660.5" y="50.5" width="28" height="8" fill="#282c38" stroke="#000" stroke-width="1"/><rect x="660.5" y="60.5" width="28" height="8" fill="#90d0c4" stroke="#000" stroke-width="1"/><rect x="660.5" y="70.5" width="28" height="8" fill="#74b49c" stroke="#000" stroke-width="1"/><rect x="690.5" y="0.5" width="28" height="8" fill="#f890a0" stroke="#000" stroke-width="1"/><rect x="690.5" y="10.5" width="28" height="8" fill="#d06880" stroke="#000" stroke-width="1"/><rect x="690.5" y="20.5" width="28" height="8" fill="#886870" stroke="#000" stroke-width="1"/><rect x="690.5" y="30.5" width="28" height="8" fill="#c0b0dc" stroke="#000" stroke-width="1"/><rect x="690.5" y="40.5" width="28" height="8" fill="#7c9cd4" stroke="#000" stroke-width="1"/><rect x="690.5" y="50.5" width="28" height="8" fill="#c8e0e0" stroke="#000" stroke-width="1"/><rect x="690.5" y="60.5" width="28" height="8" fill="#70b8ac" stroke="#000" stroke-width="1"/><rect x="690.5" y="70.5" width="28" height="8" fill="#589c7c" stroke="#000" stroke-width="1"/><rect x="720.5" y="0.5" width="28" height="8" fill="#f87088" stroke="#000" stroke-width="1"/><rect x="720.5" y="10.5" width="28" height="8" fill="#c04c68" stroke="#000" stroke-width="1"/><rect x="720.5" y="20.5" width="28" height="8" fill="#b890b0" stroke="#000" stroke-width="1"/><rect x="720.5" y="30.5" width="28" height="8" fill="#a890c4" stroke="#000" stroke-width="1"/><rect x="720.5" y="40.5" width="28" height="8" fill="#4c6cb8" stroke="#000" stroke-width="1"/><rect x="720.5" y="50.5" width="28" height="8" fill="#b0d0d8" stroke="#000" stroke-width="1"/><rect x="720.5" y="60.5" width="28" height="8" fill="#50a098" stroke="#000" stroke-width="1"/><rect x="720.5" y="70.5" width="28" height="8" fill="#508c70" stroke="#000" stroke-width="1"/></svg>
<div class="a" style="left:778px;top:454px;width:18px;height:81px;background:#f0f0f0;"></div>
<div class="btn" style="left:778px;top:454px;width:18px;height:14px"></div>
<div class="btn" style="left:778px;top:468px;width:18px;height:22px"></div>
<div class="btn" style="left:778px;top:521px;width:18px;height:14px"></div>
<svg style="left:778px;top:454px" width="18" height="81"><path d="M5 9l3.5-4 3.5 4z" fill="#000"/><path d="M5 72l3.5 4 3.5-4z" fill="#000"/></svg>
<div class="sunk" style="left:59px;top:428px;width:205px;height:20px;background:#fff"></div>
<div class="t" style="left:63.9px;top:432px;font-size:12px;transform:scaleX(0.8341);transform-origin:0 0;">DMC(R)</div>
<div class="btn" style="left:247px;top:430px;width:15px;height:16px"></div>
<svg style="left:247px;top:430px" width="15" height="16"><path d="M4 6.5h7l-3.5 4z" fill="#000"/></svg>
<div class="a" style="left:5px;top:557px;width:824px;height:2px;background:#f4f4f4;"></div>
<div class="a" style="left:5px;top:559px;width:824px;height:1px;background:#9c9c9c;"></div>
<div class="a" style="left:5px;top:560px;width:824px;height:3px;background:#f6f6f6;"></div>
<div class="a" style="left:5px;top:563px;width:824px;height:1px;background:#9a9a9a;"></div>
<div class="a" style="left:5px;top:564px;width:824px;height:1px;background:#5a5a5a;"></div>
<div class="a" style="left:5px;top:565px;width:824px;height:40px;background:#f0f0f0;"></div>
<svg style="left:26px;top:569px" width="752" height="40" shape-rendering="crispEdges"><rect x="0.5" y="0.5" width="23" height="18" fill="#8c3c3c" stroke="#000" stroke-width="1"/><rect x="25.5" y="0.5" width="23" height="18" fill="#7c5a38" stroke="#000" stroke-width="1"/><rect x="225.5" y="0.5" width="23" height="18" fill="#a07838" stroke="#000" stroke-width="1"/><rect x="250.5" y="0.5" width="23" height="18" fill="#cdb878" stroke="#000" stroke-width="1"/><rect x="275.5" y="0.5" width="23" height="18" fill="#a07030" stroke="#000" stroke-width="1"/><rect x="300.5" y="0.5" width="23" height="18" fill="#c08a48" stroke="#000" stroke-width="1"/><rect x="324.5" y="0" width="25" height="19" fill="#fbf4e4"/><rect x="327" y="2" width="20" height="15" fill="#dcbb80"/><rect x="332" y="0" width="10" height="2" fill="#000"/><rect x="332" y="17" width="10" height="2" fill="#000"/><rect x="325" y="6" width="2" height="7" fill="#000"/><rect x="347" y="6" width="2" height="7" fill="#000"/><rect x="350.5" y="0.5" width="23" height="18" fill="#b4aca0" stroke="#000" stroke-width="1"/><rect x="375.5" y="0.5" width="23" height="18" fill="#8da07a" stroke="#000" stroke-width="1"/><rect x="400.5" y="0.5" width="23" height="18" fill="#a8b898" stroke="#000" stroke-width="1"/><rect x="425.5" y="0.5" width="23" height="18" fill="#e4dcc4" stroke="#000" stroke-width="1"/><rect x="450.5" y="0.5" width="23" height="18" fill="#8c8454" stroke="#000" stroke-width="1"/><rect x="475.5" y="0.5" width="23" height="18" fill="#b0a070" stroke="#000" stroke-width="1"/><rect x="500.5" y="0.5" width="23" height="18" fill="#8c6040" stroke="#000" stroke-width="1"/><rect x="525.5" y="0.5" width="23" height="18" fill="#8c8c68" stroke="#000" stroke-width="1"/><rect x="550.5" y="0.5" width="23" height="18" fill="#c8c8a8" stroke="#000" stroke-width="1"/><rect x="575.5" y="0.5" width="23" height="18" fill="#a0a48c" stroke="#000" stroke-width="1"/><rect x="600.5" y="0.5" width="23" height="18" fill="#e8e8dc" stroke="#000" stroke-width="1"/><rect x="625.5" y="0.5" width="23" height="18" fill="#e06428" stroke="#000" stroke-width="1"/><rect x="650.5" y="0.5" width="23" height="18" fill="#f8a060" stroke="#000" stroke-width="1"/><rect x="675.5" y="0.5" width="23" height="18" fill="#f8d040" stroke="#000" stroke-width="1"/><rect x="700.5" y="0.5" width="23" height="18" fill="#f8e050" stroke="#000" stroke-width="1"/><rect x="725.5" y="0.5" width="23" height="18" fill="#d0a850" stroke="#000" stroke-width="1"/><rect x="0.5" y="20.5" width="23" height="18" fill="#dcc890" stroke="#000" stroke-width="1"/><rect x="25.5" y="20.5" width="23" height="18" fill="#e8d8a8" stroke="#000" stroke-width="1"/><rect x="225.5" y="20.5" width="23" height="18" fill="#b02820" stroke="#000" stroke-width="1"/><rect x="250.5" y="20.5" width="23" height="18" fill="#ece4c8" stroke="#000" stroke-width="1"/><rect x="275.5" y="20.5" width="23" height="18" fill="#787030" stroke="#000" stroke-width="1"/><rect x="300.5" y="20.5" width="23" height="18" fill="#5c4830" stroke="#000" stroke-width="1"/><rect x="325.5" y="20.5" width="23" height="18" fill="#6c5840" stroke="#000" stroke-width="1"/><rect x="350.5" y="20.5" width="23" height="18" fill="#988868" stroke="#000" stroke-width="1"/><rect x="375.5" y="20.5" width="23" height="18" fill="#5c6050" stroke="#000" stroke-width="1"/><rect x="400.5" y="20.5" width="23" height="18" fill="#a8c0b8" stroke="#000" stroke-width="1"/><rect x="425.5" y="20.5" width="23" height="18" fill="#b8d0c8" stroke="#000" stroke-width="1"/><rect x="450.5" y="20.5" width="23" height="18" fill="#3c4830" stroke="#000" stroke-width="1"/><rect x="475.5" y="20.5" width="23" height="18" fill="#4c3c28" stroke="#000" stroke-width="1"/><rect x="500.5" y="20.5" width="23" height="18" fill="#f0e0c8" stroke="#000" stroke-width="1"/><rect x="525.5" y="20.5" width="23" height="18" fill="#e8d0b0" stroke="#000" stroke-width="1"/><rect x="550.5" y="20.5" width="23" height="18" fill="#f8b810" stroke="#000" stroke-width="1"/><rect x="575.5" y="20.5" width="23" height="18" fill="#885028" stroke="#000" stroke-width="1"/><rect x="600.5" y="20.5" width="23" height="18" fill="#c88830" stroke="#000" stroke-width="1"/><rect x="625.5" y="20.5" width="23" height="18" fill="#5c5c40" stroke="#000" stroke-width="1"/><rect x="650.5" y="20.5" width="23" height="18" fill="#888" stroke="#000" stroke-width="1"/><rect x="675.5" y="20.5" width="23" height="18" fill="#888" stroke="#000" stroke-width="1"/><rect x="700.5" y="20.5" width="23" height="18" fill="#888" stroke="#000" stroke-width="1"/><rect x="725.5" y="20.5" width="23" height="18" fill="#888" stroke="#000" stroke-width="1"/></svg>
<div class="btn" style="left:6px;top:569px;width:14px;height:16px"></div>
<div class="btn" style="left:6px;top:592px;width:14px;height:16px"></div>
<svg style="left:6px;top:569px" width="14" height="36"><path d="M4 9.500l3-3.500 3 3.500z" fill="#000"/><path d="M4 30.500l3 3.500 3-3.500z" fill="#000"/></svg>
<div class="btn" style="left:797px;top:566px;width:15px;height:14px"></div>
<div class="btn" style="left:812px;top:566px;width:17px;height:14px"></div>
<svg style="left:797px;top:566px" width="32" height="14"><path d="M3.500 7h8" stroke="#000" stroke-width="2"/><path d="M2.500 7l4-4v8z" fill="#000"/><path d="M18 7h8" stroke="#000" stroke-width="2"/><path d="M27.500 7l-4-4v8z" fill="#000"/></svg>
<div class="t" style="left:810px;top:583px;font-size:12px;transform:scaleX(0.8487);transform-origin:0 0;">109</div>
<div class="a" style="left:670px;top:591.5px;width:157px;height:20px;background:#fff;border-radius:7px 0 0 0"></div>
<svg style="left:0;top:0" width="838" height="605"><path d="M678 606q-0.500-4.500 3.500-5.500q3.500 1 3.500 5.500z" fill="#c2392b"/><path d="M686 606q0.500-4 4-4.200q3 0.800 3.200 4.200z" fill="#e2a53a"/><path d="M699.500 606C702 601 707.500 597 709.500 593.800M716 606l2.500-4.500M723.500 606l2-5M736 605.500a4 3.500 0 1 1 7-1.500M748.500 606l3-6M757 603.500h5M770 606l1.500-3M791 603l1-1.500" fill="none" stroke="#5c5c5c" stroke-width="1.300" stroke-linecap="round"/></svg>
<div class="a" style="left:59px;top:448px;width:207px;height:160px;background:#fff;border:1px solid #000;border-right-color:#7a7a7a"></div>
<div class="t" style="left:62.5px;top:449.5px;font-size:12px;transform:scaleX(0.8446);transform-origin:0 0;word-spacing:1px;">Mill Hill(R) Antique Glass Seed Bead</div>
<div class="t" style="left:62.5px;top:462.5px;font-size:12px;transform:scaleX(0.8382);transform-origin:0 0;word-spacing:1px;">Mill Hill(R) Petite Glass Seed Bead</div>
<div class="t" style="left:62.5px;top:475.5px;font-size:12px;transform:scaleX(0.8348);transform-origin:0 0;word-spacing:1px;">Mill Hill(R) Frosted Glass Seed Bead</div>
<div class="t" style="left:62.5px;top:488.5px;font-size:12px;transform:scaleX(0.8342);transform-origin:0 0;word-spacing:1px;">Mill Hill(R) Crayon Seed Bead</div>
<div class="t" style="left:62.5px;top:501.5px;font-size:12px;transform:scaleX(0.8372);transform-origin:0 0;word-spacing:1px;">Mill Hill(R) Pebble Glass Bead</div>
<div class="t" style="left:62.5px;top:514.5px;font-size:12px;transform:scaleX(0.8449);transform-origin:0 0;word-spacing:1px;">Mill Hill(R) Magnifica Glass Bead</div>
<div class="t" style="left:62.5px;top:527.5px;font-size:12px;transform:scaleX(0.8415);transform-origin:0 0;word-spacing:1px;">Caron Collection</div>
<div class="t" style="left:62.5px;top:540.5px;font-size:12px;transform:scaleX(0.8581);transform-origin:0 0;word-spacing:1px;">Madeira(R)</div>
<div class="a" style="left:60px;top:553px;width:189px;height:13px;background:#3399ff;"></div>
<div class="t" style="left:62.5px;top:553.5px;font-size:12px;transform:scaleX(0.8310);transform-origin:0 0;color:#fff;word-spacing:1px;">Blends</div>
<div class="t" style="left:62.5px;top:566.5px;font-size:12px;transform:scaleX(0.8344);transform-origin:0 0;word-spacing:1px;">Custom Bead</div>
<div class="t" style="left:62.5px;top:579.5px;font-size:12px;transform:scaleX(0.8445);transform-origin:0 0;word-spacing:1px;">Custom Thread</div>
<div class="t" style="left:62.5px;top:592.5px;font-size:12px;transform:scaleX(0.8463);transform-origin:0 0;word-spacing:1px;">Generic Color</div>
<div class="a" style="left:249px;top:449px;width:16px;height:156px;background:#f0f0f0;"></div>
<svg style="left:249px;top:449px" width="16" height="156"><path d="M4.5 10l3.5-3.5 3.5 3.5z" fill="#505050"/><path d="M4.5 150l3.5 3.5 3.5-3.5z" fill="#505050"/></svg>
<div class="a" style="left:250px;top:572px;width:15px;height:15px;border:1px solid #979797;border-radius:3px;background:linear-gradient(90deg,#f5f5f5 0,#e9e9eb 45%,#d9dadc 50%,#cfcfcf 100%);box-shadow:inset 0 0 0 1px rgba(255,255,255,.7)"></div>
</body></html>
